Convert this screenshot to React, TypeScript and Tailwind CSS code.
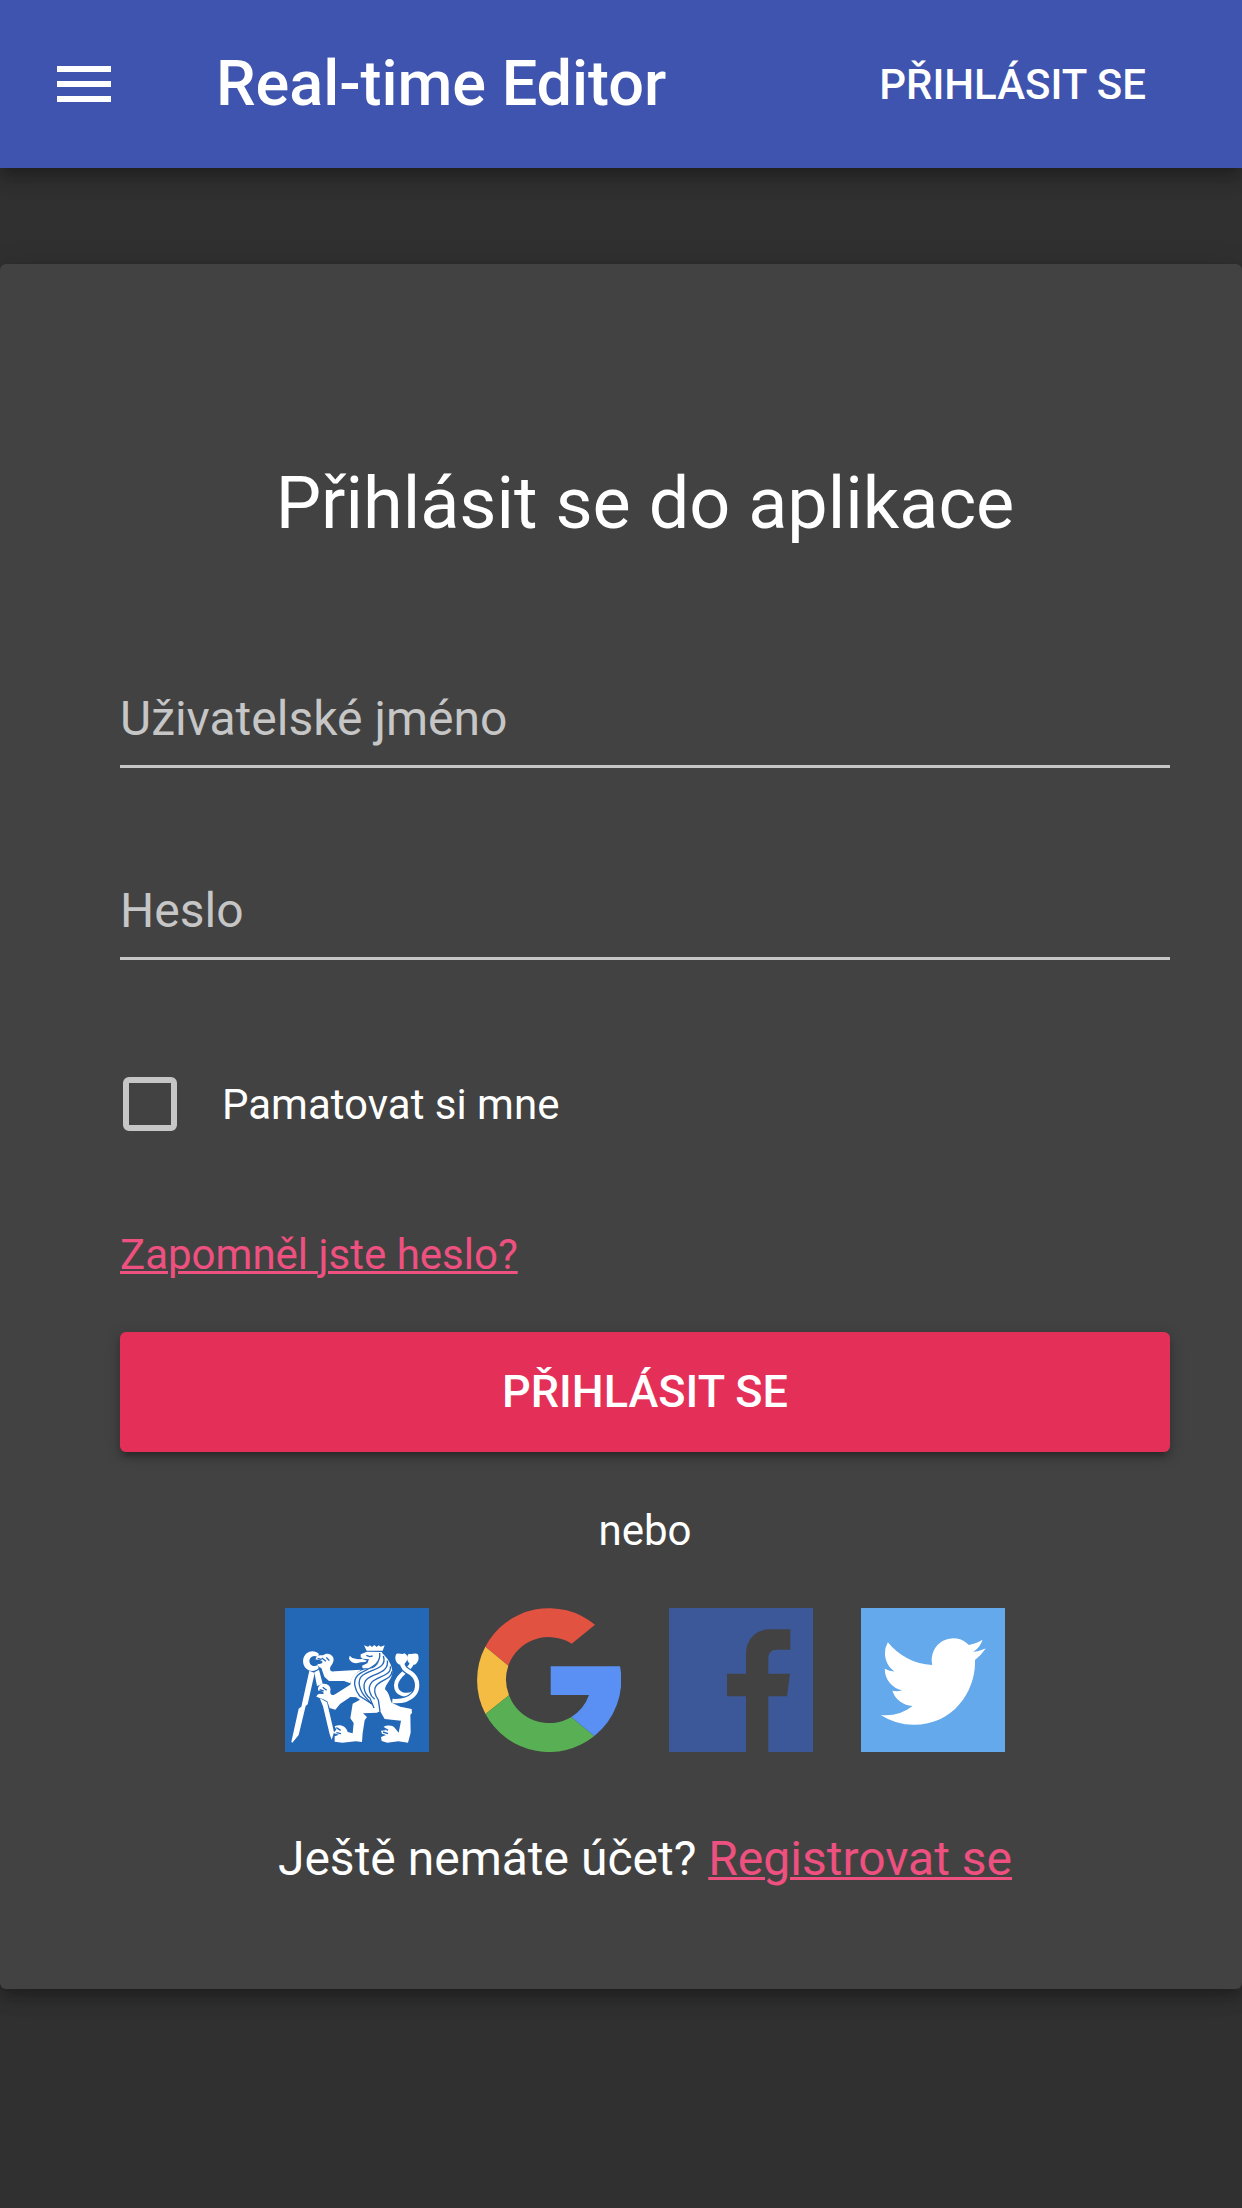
import React from "react";

function MenuIcon() {
  return (
    <svg viewBox="0 0 24 24" className="size-[72px] fill-current">
      <path d="M3 18h18v-2H3v2zm0-5h18v-2H3v2zm0-7v2h18V6H3z" />
    </svg>
  );
}

function UniversityLogo() {
  return (
    <svg viewBox="30 30 432 432" className="size-36 bg-[#2367b7]">
      {/* crossed tail */}
      <g fill="none" strokeLinecap="butt">
        <path d="M413 190C409 217 364 229 363 262C363 288 392 298 417 284" stroke="#fff" strokeWidth="12" />
        <path d="M380 190C381 215 399 219 410 227C431 243 431 275 415 291C403 304 382 311 352 309" stroke="#2367b7" strokeWidth="20" />
        <path d="M380 188C381 215 399 219 410 227C431 243 431 275 415 291C403 304 382 311 352 309" stroke="#fff" strokeWidth="13" />
      </g>
      <g fill="#fff">
        <path d="M364 168C374 164 380 172 388 166C398 170 401 184 393 192L388 198L374 200C363 196 357 180 364 168Z" />
        <path d="M402 167C411 171 418 163 428 168C434 180 430 195 419 200L405 197C395 190 393 174 402 167Z" />
        {/* drawing compass */}
        <path d="M132 168C122 158 106 157 95 166C82 177 81 197 91 209C101 220 118 223 131 211L128 201C119 208 107 203 104 194C101 183 108 174 119 174L128 176Z" />
        <path d="M103 218L119 225L98 319L92 324L71 411L52 434L49 432L71 332L79 326Z" />
        <path d="M118 223L132 215L143 257L126 264Z" />
        <path d="M134 300L156 313L177 403L170 425L164 409L144 325Z" />
        {/* upper arm and paw */}
        <path d="M122 185C122 174 132 170 144 172C153 164 169 166 175 179C178 191 171 199 166 207C163 218 169 222 180 220L258 215C240 226 229 239 226 256L207 249L162 249L148 236L139 210C131 207 127 202 128 197C135 199 141 197 143 191C136 186 130 184 122 185Z" />
        {/* lower arm and paw */}
        <path d="M129 278C128 265 134 257 147 257C159 257 169 266 166 278C164 289 171 295 183 287L229 258C230 275 237 288 248 298L226 297L195 318L181 335L164 330L157 310C144 301 130 299 124 296C126 290 130 287 135 287C139 287 143 290 147 286C142 280 137 277 129 278Z" />
        {/* crown */}
        <path d="M267 142L279 146L285 142L291 147L298 141L305 147L311 142L317 146L329 142L323 158L275 158Z" />
        {/* head and tongue */}
        <path d="M257 169L276 161L321 162L325 183L304 199L286 211L263 211L261 203L277 196L282 184L263 182L257 178Z" />
        <path d="M224 173L232 180L249 184L262 183L276 188L270 192L257 193C245 198 228 196 222 182Z" />
        {/* mane, body and hind legs */}
        <path d="M320 164C338 179 353 202 352 224C350 246 331 258 330 274C343 284 344 303 350 314L376 326L410 333L411 345L406 350L407 404L399 434L370 430L337 434L320 429L318 417L333 411L321 407L318 398L332 397L325 387C337 381 352 381 359 389L371 404L378 368L329 363L315 339L306 344L264 346L276 357L269 367L263 405L261 432L242 430L202 434L179 431L179 415L192 410L175 405L184 395L179 385C196 377 214 386 218 402L233 406L236 375L226 361L233 317L255 305C239 297 225 274 227 251C230 232 252 213 292 211C309 202 320 184 320 164Z" />
      </g>
      <g fill="none" stroke="#2367b7" strokeWidth="4">
        <path d="M325 174C338 213 289 213 263 232C243 247 255 280 272 298L290 318" />
        <path d="M337 188C343 223 299 226 279 241C260 255 265 285 285 301L297 330" />
        <path d="M346 205C350 235 308 233 290 253C276 270 285 293 299 304" />
        <path d="M351 220C350 245 318 244 303 264C295 275 300 291 310 306L315 340" />
        <path d="M314 165C320 208 266 213 247 233C232 249 240 276 254 294L291 318" />
        <path d="M274 172L284 176L293 174M128 181L140 185M140 180L153 190M154 178L163 188M134 275L146 279M143 268L155 277M184 389L197 397M184 404L198 407M324 388L339 397M324 402L339 407" />
      </g>
    </svg>
  );
}

function GoogleLogo() {
  return (
    <svg viewBox="0 0 144 144" className="size-36">
      <path fill="#e15241" d="M8.3 38.8A72 72 0 0 1 118 16.7L94.7 35.7A43 43 0 0 0 31.3 57.7Z" />
      <path fill="#f4bc42" d="M8.3 38.8L31.3 57.7A43 43 0 0 0 32 87.3L8.5 106A72 72 0 0 1 8.3 38.8Z" />
      <path fill="#58af54" d="M8.5 106L32 87.3A43 43 0 0 0 94.3 109L117.3 128A72 72 0 0 1 8.5 106Z" />
      <path fill="#5a90f3" d="M73.7 58.3H143A72 72 0 0 1 117.3 128L94.3 109A43 43 0 0 0 112 87H73.7Z" />
    </svg>
  );
}

function FacebookLogo() {
  return (
    <svg viewBox="0 0 144 144" className="size-36">
      <path
        fill="#3c5898"
        d="M0 0H144V144H99.3V88.3H118L121 65.7H99.3V51.3C99.3 44.9 102 41.7 108.5 41.7H121.3V21.3H101C86.5 21.3 77 31.5 77 46V65.7H58V88.3H77V144H0Z"
      />
    </svg>
  );
}

function TwitterLogo() {
  return (
    <svg viewBox="0 0 144 144" className="size-36 bg-[#63a9eb]">
      <path
        fill="#fff"
        transform="translate(19.7 20.2) scale(4.375 4.44)"
        d="M23.953 4.57a10 10 0 01-2.825.775 4.958 4.958 0 002.163-2.723c-.951.555-2.005.959-3.127 1.184a4.92 4.92 0 00-8.384 4.482C7.69 8.095 4.067 6.13 1.64 3.162a4.822 4.822 0 00-.666 2.475c0 1.71.87 3.213 2.188 4.096a4.904 4.904 0 01-2.228-.616v.06a4.923 4.923 0 003.946 4.827 4.996 4.996 0 01-2.212.085 4.936 4.936 0 004.604 3.417 9.867 9.867 0 01-6.102 2.105c-.39 0-.779-.023-1.17-.067a13.995 13.995 0 007.557 2.209c9.053 0 13.998-7.496 13.998-13.985 0-.21 0-.42-.015-.63A9.935 9.935 0 0024 4.59z"
      />
    </svg>
  );
}

function Field({ label, type }: { label: string; type: string }) {
  return (
    <input
      type={type}
      placeholder={label}
      aria-label={label}
      className="block h-24 w-full border-b-3 border-[#c6c6c6] bg-transparent text-5xl leading-[57px] text-white outline-none placeholder:text-[#c6c6c6] placeholder:opacity-100"
    />
  );
}

export default function App() {
  return (
    <div className="min-h-[2208px] overflow-hidden bg-[#303030] font-['Roboto',sans-serif] text-white">
      <header className="relative flex h-[168px] items-center bg-[#3f54ae] px-12 shadow-[0_6px_12px_-3px_rgba(0,0,0,0.2),0_12px_15px_0_rgba(0,0,0,0.14),0_3px_30px_0_rgba(0,0,0,0.12)]">
        <button aria-label="Menu">
          <MenuIcon />
        </button>
        <h1 className="mb-0.5 ml-24 flex-1 text-[63px] leading-none font-medium tracking-[-0.05px]">
          Real-time Editor
        </h1>
        <button className="mt-0.5 px-12 text-[42px] leading-none font-medium">PŘIHLÁSIT SE</button>
      </header>

      <main className="mt-24 h-[1725px] rounded-md bg-[#424242] pt-[198px] pr-[72px] pl-[120px] shadow-[0_6px_12px_-3px_rgba(0,0,0,0.2),0_12px_15px_0_rgba(0,0,0,0.14),0_3px_30px_0_rgba(0,0,0,0.12)]">
        <h2 className="text-center text-7xl leading-[84px]">Přihlásit se do aplikace</h2>

        <form onSubmit={(e) => e.preventDefault()}>
          <div className="mt-[126px] flex flex-col gap-24">
            <Field label="Uživatelské jméno" type="text" />
            <Field label="Heslo" type="password" />
          </div>

          <label className="mt-[108px] flex h-18 items-center">
            <input
              type="checkbox"
              className="ml-[3px] size-[54px] appearance-none rounded-md border-6 border-[#c6c6c6]"
            />
            <span className="mt-0.5 ml-[45px] text-[42px] leading-[60px]">Pamatovat si mne</span>
          </label>

          <div className="mt-[88px] h-[104px]">
            <a
              href="#"
              className="text-[42px] leading-[54px] text-[#ee5080] underline decoration-3"
            >
              Zapomněl jste heslo?
            </a>
          </div>

          <button className="block h-30 w-full rounded-md bg-[#e43058] text-[45px] font-medium shadow-[0_3px_15px_0_rgba(0,0,0,0.2),0_6px_6px_0_rgba(0,0,0,0.14),0_9px_3px_-6px_rgba(0,0,0,0.12)]">
            PŘIHLÁSIT SE
          </button>
        </form>

        <p className="mt-[49px] text-center text-[42px] leading-[60px]">nebo</p>

        <div className="mt-[47px] flex justify-center gap-12">
          <a href="#" aria-label="ČVUT"><UniversityLogo /></a>
          <a href="#" aria-label="Google"><GoogleLogo /></a>
          <a href="#" aria-label="Facebook"><FacebookLogo /></a>
          <a href="#" aria-label="Twitter"><TwitterLogo /></a>
        </div>

        <p className="mt-[72px] text-center text-5xl leading-[69px]">
          Ještě nemáte účet?{" "}
          <a href="#" className="text-[#ee5080] underline decoration-3">
            Registrovat se
          </a>
        </p>
      </main>
    </div>
  );
}
